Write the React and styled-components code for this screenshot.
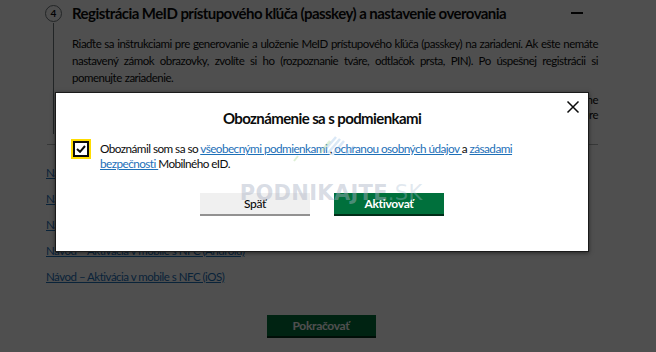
import React from 'react';
import styled, {createGlobalStyle} from 'styled-components';

const GlobalStyle = createGlobalStyle`
  html, body {
    margin: 0;
    padding: 0;
    background: #ffffff;
  }
  body {
    font-family: Lato, "Noto Sans", sans-serif;
    color: #0b0c0c;
  }
`;

const Page = styled.div`
  position: relative;
  width: 656px;
  height: 352px;
  overflow: hidden;
  background: #ffffff;
`;

const Main = styled.div`
  display: flex;
  flex-direction: column;
  padding: 3px 58px 0 46px;
`;

const StepHeader = styled.div`
  display: flex;
  align-items: center;
  gap: 10px;
  height: 20px;
`;

const StepNumber = styled.div`
  display: flex;
  align-items: center;
  justify-content: center;
  width: 15px;
  height: 15px;
  margin-left: -1px;
  border: 1.5px solid #6f777b;
  border-radius: 50%;
  font-size: 10px;
  font-weight: 700;
  color: #0b0c0c;
`;

const StepTitle = styled.h2`
  flex: 1;
  margin: 0;
  font-size: 15px;
  font-weight: 700;
  letter-spacing: -0.55px;
  white-space: nowrap;
`;

const Collapse = styled.span`
  width: 12px;
  height: 2px;
  margin-right: 15px;
  background: #0b0c0c;
`;

const StepBody = styled.div`
  margin-left: 7px;
  padding: 12px 0 12px 18px;
  border-left: 1.5px solid #6f777b;
`;

const Paragraph = styled.p`
  margin: 0 0 6px;
  font-size: 11.5px;
  line-height: 17px;
  letter-spacing: -0.5px;
  word-spacing: 0.5px;
  text-align: justify;
`;

const JustLine = styled.div`
  font-size: 11.5px;
  line-height: 15px;
  letter-spacing: -0.5px;
  text-align: justify;
  text-align-last: justify;
`;

const Rule = styled.hr`
  width: 551px;
  margin: 10px 0 0 1px;
  border: 0;
  border-top: 1px solid #b1b4b6;
`;

const LinkList = styled.div`
  display: flex;
  flex-direction: column;
  gap: 9px;
  margin-top: 19px;
`;

const GuideLink = styled.a`
  align-self: flex-start;
  font-size: 11.5px;
  line-height: 17px;
  letter-spacing: -0.5px;
  color: #1d70b8;
  text-decoration: underline;
`;

const Actions = styled.div`
  display: flex;
  justify-content: center;
  margin: 30px 0 0 -2px;
`;

const PrimaryButton = styled.button`
  width: ${(p) => p.width || 110}px;
  height: 23px;
  padding: 0;
  border: 0;
  border-bottom: 2px solid #002d18;
  background: #00703c;
  color: #ffffff;
  font-family: Lato, sans-serif;
  font-size: 12px;
  font-weight: 700;
  letter-spacing: -0.3px;
`;

const SecondaryButton = styled(PrimaryButton)`
  border-bottom-color: #929191;
  background: #f0f0f0;
  color: #0b0c0c;
  font-weight: 500;
`;

const Overlay = styled.div`
  position: absolute;
  inset: 0;
  padding: 92px 0 0 55px;
  background: rgba(0, 0, 0, 0.69);
`;

const Modal = styled.div`
  position: relative;
  box-sizing: border-box;
  width: 534px;
  height: 160px;
  padding: 16px 17px 0;
  border: 1.5px solid #1a1a1a;
  background: #ffffff;
  box-shadow: 0 1px 4px rgba(0, 0, 0, 0.5);
`;

const Close = styled.button`
  position: absolute;
  top: 7px;
  right: 8px;
  display: flex;
  padding: 0;
  border: 0;
  background: none;
`;

const ModalTitle = styled.h3`
  margin: 0;
  text-align: center;
  font-size: 15px;
  font-weight: 700;
  letter-spacing: -0.6px;
`;

const Consent = styled.label`
  display: flex;
  align-items: flex-start;
  gap: 11px;
  margin-top: 14px;
`;

const CheckBox = styled.span`
  flex: none;
  display: flex;
  align-items: center;
  justify-content: center;
  box-sizing: border-box;
  width: 16px;
  height: 16px;
  border: 2px solid #0b0c0c;
  background: #ffffff;
  box-shadow: 0 0 0 2px #ffdd00;
`;

const ConsentText = styled.span`
  max-width: 424px;
  font-size: 11.75px;
  line-height: 15px;
  letter-spacing: -0.55px;
  color: #0b0c0c;
`;

const TermsLink = styled.a`
  color: #1d70b8;
  text-decoration: underline;
`;

const ModalActions = styled.div`
  position: relative;
  display: flex;
  justify-content: center;
  gap: 24px;
  margin-top: 22px;
`;

const Watermark = styled.div`
  position: absolute;
  top: -12px;
  left: 50%;
  transform: translateX(-45%);
  display: flex;
  align-items: center;
  font-family: "DejaVu Sans", sans-serif;
  font-size: 21px;
  font-weight: 700;
  letter-spacing: 0.3px;
  color: rgba(170, 178, 196, 0.45);
  pointer-events: none;
  span {
    font-weight: 400;
    color: rgba(170, 190, 210, 0.35);
  }
`;

const Stripes = styled.svg`
  position: absolute;
  top: 42px;
  left: 228px;
  pointer-events: none;
`;

const guides = [
    'Návod – Registrácia v mobile bez NFC',
    'Návod – Registrácia s čítačkou',
    'Návod – Aktivácia v mobile bez NFC',
    'Návod – Aktivácia v mobile s NFC (Android)',
    'Návod – Aktivácia v mobile s NFC (iOS)',
];

export default function App() {
    return (
        <Page>
            <GlobalStyle/>
            <Main>
                <StepHeader>
                    <StepNumber>4</StepNumber>
                    <StepTitle>Registrácia MeID prístupového kľúča (passkey) a nastavenie overovania</StepTitle>
                    <Collapse/>
                </StepHeader>
                <StepBody>
                    <Paragraph>
                        Riaďte sa inštrukciami pre generovanie a uloženie MeID prístupového kľúča (passkey)
                        na zariadení. Ak ešte nemáte nastavený zámok obrazovky, zvolíte si ho (rozpoznanie tváre,
                        odtlačok prsta, PIN). Po úspešnej registrácii si pomenujte zariadenie.
                    </Paragraph>
                    <JustLine>Následne si nastavte spôsob overovania, ktorým budete potvrdzovať prihlásenie a podpis v aplikácii jedne</JustLine>
                    <JustLine>z ponúkaných možností. Spôsob overovania môžete neskôr zmeniť v nastaveniach aplikácie pre</JustLine>
                </StepBody>
                <Rule/>
                <LinkList>
                    {guides.map((text) => (
                        <GuideLink key={text} href="#">{text}</GuideLink>
                    ))}
                </LinkList>
                <Actions>
                    <PrimaryButton width={109}>Pokračovať</PrimaryButton>
                </Actions>
            </Main>

            <Overlay>
                <Modal>
                    <Close aria-label="Zavrieť">
                        <svg width="14" height="14" viewBox="0 0 14 14">
                            <path d="M1.5 1.5 L12.5 12.5 M12.5 1.5 L1.5 12.5" stroke="#0b0c0c" strokeWidth="1.5" fill="none"/>
                        </svg>
                    </Close>
                    <ModalTitle>Oboznámenie sa s podmienkami</ModalTitle>
                    <Consent>
                        <CheckBox>
                            <svg width="10" height="8" viewBox="0 0 10 8">
                                <path d="M1 4 L4 6.8 L9 1" stroke="#0b0c0c" strokeWidth="2" fill="none"/>
                            </svg>
                        </CheckBox>
                        <ConsentText>
                            Oboznámil som sa so <TermsLink href="#">všeobecnými podmienkami </TermsLink>,{' '}
                            <TermsLink href="#">ochranou osobných údajov </TermsLink> a{' '}
                            <TermsLink href="#">zásadami bezpečnosti </TermsLink> Mobilného eID.
                        </ConsentText>
                    </Consent>
                    <ModalActions>
                        <Watermark>PODNIKAJTE<span>.SK</span></Watermark>
                        <SecondaryButton>Späť</SecondaryButton>
                        <PrimaryButton>Aktivovať</PrimaryButton>
                    </ModalActions>
                    <Stripes width="80" height="40" viewBox="0 0 80 40">
                        <path d="M40 16 L52 2 M44 18 L56 4 M48 20 L60 6" stroke="rgba(150,190,230,0.35)" strokeWidth="2.5"/>
                        <path d="M36 18 L46 6" stroke="rgba(170,215,150,0.35)" strokeWidth="2.5"/>
                        <path d="M10 26 L14 21" stroke="rgba(170,215,150,0.4)" strokeWidth="2"/>
                        <path d="M62 20 L70 11" stroke="rgba(150,190,230,0.35)" strokeWidth="2.5"/>
                    </Stripes>
                </Modal>
            </Overlay>
        </Page>
    );
}
